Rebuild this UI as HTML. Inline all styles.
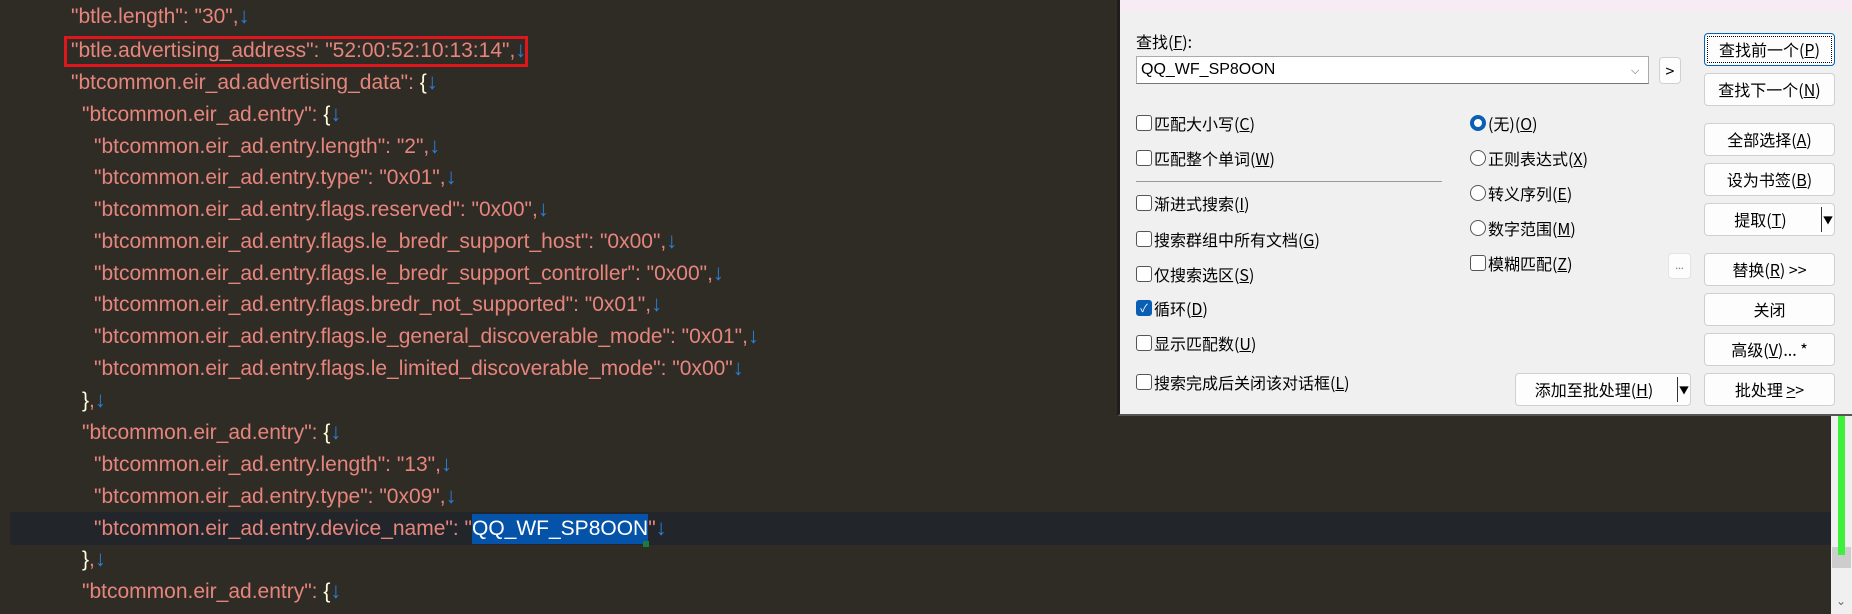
<!DOCTYPE html>
<html><head><meta charset="utf-8"><style>
*{margin:0;padding:0;box-sizing:border-box}
body{width:1852px;height:614px;overflow:hidden;background:#2f2c26;position:relative;font-family:"Liberation Sans","Noto Sans CJK SC",sans-serif}
.l{position:absolute;left:0;height:32px;line-height:32px;font-size:21px;color:#e5857c;white-space:pre}
.a{color:#2a7fd8;font-size:22px}
.w{color:#ffffdd}
.cur{position:absolute;left:10px;right:0;top:512px;height:33px;background:#22262a}
.red{position:absolute;left:64px;top:36px;width:464px;height:31px;border:3px solid #e0161e}
.dlg{position:absolute;left:1117px;top:0;width:735px;height:416px;background:#f0f0f0;border-left:3px solid #1f1e1c;border-bottom:2px solid #555;font-size:16px;color:#000;font-family:"Noto Sans CJK SC","Liberation Sans",sans-serif}
.top{position:absolute;left:0;top:0;right:0;height:12px;background:#f7ecf4}
.ab{position:absolute;white-space:nowrap;line-height:20px}
.btn{position:absolute;background:#fdfdfd;border:1px solid #d0d0d0;border-radius:4px;text-align:center;line-height:31px;height:33px;font-size:16px;white-space:nowrap}
.cb{position:absolute;width:16px;height:16px;border:1px solid #555;border-radius:3px;background:#fff}
.rb{position:absolute;width:16px;height:16px;border:1px solid #555;border-radius:50%;background:#fff}
u{text-decoration:underline}
</style></head><body>
<div class="cur"></div>
<div class="l" style="top:0;left:71px">"btle.length": "30",<span class="a">↓</span></div>
<div class="l" style="top:34px;left:71px">"btle.advertising_address": "52:00:52:10:13:14",<span class="a">↓</span></div>
<div class="l" style="top:66px;left:71px">"btcommon.eir_ad.advertising_data": <span class="w">{</span><span class="a">↓</span></div>
<div class="l" style="top:98px;left:82px">"btcommon.eir_ad.entry": <span class="w">{</span><span class="a">↓</span></div>
<div class="l" style="top:130px;left:94px">"btcommon.eir_ad.entry.length": "2",<span class="a">↓</span></div>
<div class="l" style="top:161px;left:94px">"btcommon.eir_ad.entry.type": "0x01",<span class="a">↓</span></div>
<div class="l" style="top:193px;left:94px">"btcommon.eir_ad.entry.flags.reserved": "0x00",<span class="a">↓</span></div>
<div class="l" style="top:225px;left:94px">"btcommon.eir_ad.entry.flags.le_bredr_support_host": "0x00",<span class="a">↓</span></div>
<div class="l" style="top:257px;left:94px">"btcommon.eir_ad.entry.flags.le_bredr_support_controller": "0x00",<span class="a">↓</span></div>
<div class="l" style="top:288px;left:94px">"btcommon.eir_ad.entry.flags.bredr_not_supported": "0x01",<span class="a">↓</span></div>
<div class="l" style="top:320px;left:94px">"btcommon.eir_ad.entry.flags.le_general_discoverable_mode": "0x01",<span class="a">↓</span></div>
<div class="l" style="top:352px;left:94px">"btcommon.eir_ad.entry.flags.le_limited_discoverable_mode": "0x00"<span class="a">↓</span></div>
<div class="l" style="top:384px;left:82px"><span class="w">}</span>,<span class="a">↓</span></div>
<div class="l" style="top:416px;left:82px">"btcommon.eir_ad.entry": <span class="w">{</span><span class="a">↓</span></div>
<div class="l" style="top:448px;left:94px">"btcommon.eir_ad.entry.length": "13",<span class="a">↓</span></div>
<div class="l" style="top:480px;left:94px">"btcommon.eir_ad.entry.type": "0x09",<span class="a">↓</span></div>
<div class="l" style="top:512px;left:94px">"btcommon.eir_ad.entry.device_name": "<span style="background:#0553a8;color:#fff;display:inline-block;line-height:30px">QQ_WF_SP8OON</span>"<span class="a">↓</span></div>
<div style="position:absolute;left:643px;top:541px;width:6px;height:6px;background:#1e7a3c"></div>
<div class="l" style="top:543px;left:82px"><span class="w">}</span>,<span class="a">↓</span></div>
<div class="l" style="top:575px;left:82px">"btcommon.eir_ad.entry": <span class="w">{</span><span class="a">↓</span></div>
<div class="red"></div>

<div style="position:absolute;left:1831px;top:416px;width:21px;height:198px;background:#f0f0f0"></div>
<div style="position:absolute;left:1832px;top:547px;width:19px;height:21px;background:#cdcdcd"></div>
<div style="position:absolute;left:1838px;top:416px;width:7px;height:139px;background:#3cf03c"></div>
<div style="position:absolute;left:1836px;top:594px;font-size:12px;color:#666">⌄</div>

<div class="dlg">
<div class="top"></div>
<div class="ab" style="left:16px;top:31px">查找(<u>F</u>):</div>
<div style="position:absolute;left:16px;top:56px;width:513px;height:28px;background:#fff;border:1px solid #aaa;border-bottom-color:#777"></div>
<div class="ab" style="left:21px;top:60px;font-family:'Liberation Sans',sans-serif;font-size:16px">QQ_WF_SP8OON</div>
<div class="ab" style="left:511px;top:60px;font-size:11px;color:#555">⌵</div>
<div class="btn" style="left:539px;top:57px;width:22px;height:27px;line-height:25px">&gt;</div>

<div class="btn" style="left:584px;top:33px;width:131px;border:1px solid #0a5fb4;outline:1px dotted #000;outline-offset:-4px">查找前一个(<u>P</u>)</div>
<div class="btn" style="left:584px;top:73px;width:131px">查找下一个(<u>N</u>)</div>
<div class="btn" style="left:584px;top:123px;width:131px">全部选择(<u>A</u>)</div>
<div class="btn" style="left:584px;top:163px;width:131px">设为书签(<u>B</u>)</div>
<div class="btn" style="left:584px;top:203px;width:131px;padding-right:18px">提取(<u>T</u>)<span style="position:absolute;right:12px;top:3px;width:1px;height:25px;background:#333"></span><span style="position:absolute;right:1px;top:0;font-size:10px">▼</span></div>
<div class="btn" style="left:584px;top:253px;width:131px">替换(<u>R</u>) &gt;&gt;</div>
<div class="btn" style="left:584px;top:293px;width:131px">关闭</div>
<div class="btn" style="left:584px;top:333px;width:131px">高级(<u>V</u>)... *</div>
<div class="btn" style="left:584px;top:373px;width:131px">批处理 <u>&gt;</u>&gt;</div>
<div class="btn" style="left:548px;top:253px;width:23px;height:26px;line-height:22px;font-size:10px;color:#777;border-color:#e4e4e4">...</div>
<div class="btn" style="left:395px;top:373px;width:176px;padding-right:18px">添加至批处理(<u>H</u>)<span style="position:absolute;right:12px;top:3px;width:1px;height:25px;background:#333"></span><span style="position:absolute;right:1px;top:0;font-size:10px">▼</span></div>

<div class="cb" style="left:16px;top:115px"></div><div class="ab" style="left:34px;top:113px">匹配大小写(<u>C</u>)</div>
<div class="cb" style="left:16px;top:150px"></div><div class="ab" style="left:34px;top:148px">匹配整个单词(<u>W</u>)</div>
<div style="position:absolute;left:16px;top:181px;width:306px;height:1px;background:#999"></div>
<div class="cb" style="left:16px;top:195px"></div><div class="ab" style="left:34px;top:193px">渐进式搜索(<u>I</u>)</div>
<div class="cb" style="left:16px;top:231px"></div><div class="ab" style="left:34px;top:229px">搜索群组中所有文档(<u>G</u>)</div>
<div class="cb" style="left:16px;top:266px"></div><div class="ab" style="left:34px;top:264px">仅搜索选区(<u>S</u>)</div>
<div class="cb" style="left:16px;top:300px;background:#0a5fb4;border-color:#0a5fb4;color:#fff;font-size:11px;line-height:14px;text-align:center">✓</div><div class="ab" style="left:34px;top:298px">循环(<u>D</u>)</div>
<div class="cb" style="left:16px;top:335px"></div><div class="ab" style="left:34px;top:333px">显示匹配数(<u>U</u>)</div>
<div class="cb" style="left:16px;top:374px"></div><div class="ab" style="left:34px;top:372px">搜索完成后关闭该对话框(<u>L</u>)</div>

<div class="rb" style="left:350px;top:115px;border:4px solid #0a5fb4"></div><div class="ab" style="left:368px;top:113px">(无)(<u>O</u>)</div>
<div class="rb" style="left:350px;top:150px"></div><div class="ab" style="left:368px;top:148px">正则表达式(<u>X</u>)</div>
<div class="rb" style="left:350px;top:185px"></div><div class="ab" style="left:368px;top:183px">转义序列(<u>E</u>)</div>
<div class="rb" style="left:350px;top:220px"></div><div class="ab" style="left:368px;top:218px">数字范围(<u>M</u>)</div>
<div class="cb" style="left:350px;top:255px"></div><div class="ab" style="left:368px;top:253px">模糊匹配(<u>Z</u>)</div>
</div>
</body></html>
